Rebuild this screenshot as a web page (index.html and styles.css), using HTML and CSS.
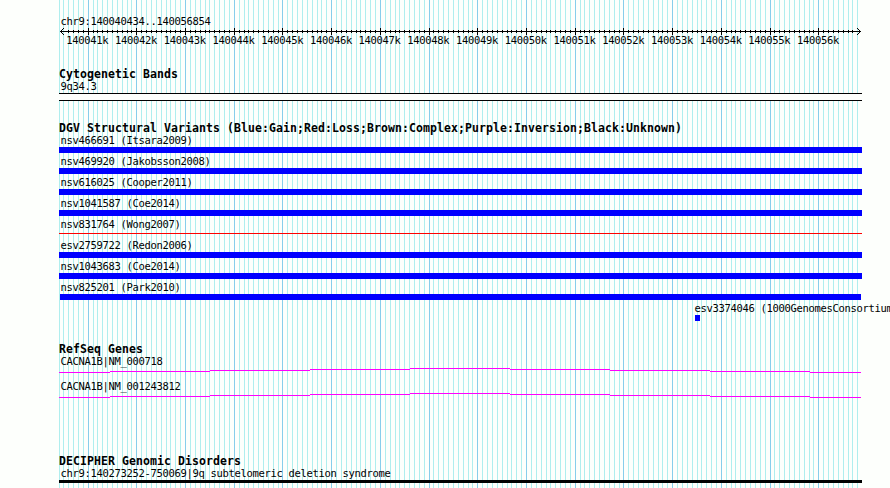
FILE: index.html
```html
<!DOCTYPE html>
<html lang="en">
<head>
    <meta charset="UTF-8">
    <title>chr9:140040434..140056854</title>
    <link rel="stylesheet" href="styles.css">
</head>
<body>
    <div class="browser">
        <svg class="grid" id="grid" width="890" height="488" shape-rendering="crispEdges"></svg>

        <div class="ruler">
            <div class="label">chr9:140040434..140056854</div>
            <svg class="axis" id="axis" width="803" height="7" shape-rendering="crispEdges"></svg>
            <div class="ticks" id="ticks"></div>
        </div>

        <div class="track cyto">
            <h2>Cytogenetic Bands</h2>
            <div class="label">9q34.3</div>
            <div class="band"></div>
        </div>

        <div class="track dgv">
            <h2>DGV Structural Variants (Blue:Gain;Red:Loss;Brown:Complex;Purple:Inversion;Black:Unknown)</h2>
            <div class="variant"><div class="label">nsv466691 (Itsara2009)</div><div class="bar gain"></div></div>
            <div class="variant"><div class="label">nsv469920 (Jakobsson2008)</div><div class="bar gain"></div></div>
            <div class="variant"><div class="label">nsv616025 (Cooper2011)</div><div class="bar gain"></div></div>
            <div class="variant"><div class="label">nsv1041587 (Coe2014)</div><div class="bar gain"></div></div>
            <div class="variant"><div class="label">nsv831764 (Wong2007)</div><div class="bar loss"></div></div>
            <div class="variant"><div class="label">esv2759722 (Redon2006)</div><div class="bar gain"></div></div>
            <div class="variant"><div class="label">nsv1043683 (Coe2014)</div><div class="bar gain"></div></div>
            <div class="variant"><div class="label">nsv825201 (Park2010)</div><div class="bar gain inset"></div></div>
            <div class="variant short"><div class="label">esv3374046 (1000GenomesConsortium</div><div class="bar gain"></div></div>
        </div>

        <div class="track genes">
            <h2>RefSeq Genes</h2>
            <div class="gene">
                <div class="label">CACNA1B|NM_000718</div>
                <svg class="intron" width="803" height="5" shape-rendering="crispEdges"><path d="M0 4.5H51M51 3.5H151M151 2.5H251M251 1.5H351M351 .5H451M451 1.5H551M551 2.5H651M651 3.5H751M751 4.5H802"/></svg>
            </div>
            <div class="gene">
                <div class="label">CACNA1B|NM_001243812</div>
                <svg class="intron" width="803" height="5" shape-rendering="crispEdges"><path d="M0 4.5H51M51 3.5H151M151 2.5H251M251 1.5H351M351 .5H451M451 1.5H551M551 2.5H651M651 3.5H751M751 4.5H802"/></svg>
            </div>
        </div>

        <div class="track decipher">
            <h2>DECIPHER Genomic Disorders</h2>
            <div class="label">chr9:140273252-750069|9q subtelomeric deletion syndrome</div>
            <div class="bar disorder"></div>
        </div>
    </div>

    <script>
        // x position of 140041k and width of 100 bp in pixels
        const origin = 88.14;
        const step = 4.871;
        const left = 59;

        let minor = '';
        let major = '';
        let axis = 'M1 3.5H802M4 0.5H5M3 1.5H4M2 2.5H3M2 4.5H3M3 5.5H4M4 6.5H5'
            + 'M798 0.5H799M799 1.5H800M800 2.5H801M800 4.5H801M799 5.5H800M798 6.5H799';

        for (let i = -6; i <= 158; i++) {
            const x = Math.max(left, Math.floor(origin + i * step));
            const isMajor = i % 10 === 0;
            if (isMajor) {
                major += `M${x + 0.5} 0V488`;
                axis += `M${x - left + 0.5} 0V7`;
            } else {
                minor += `M${x + 0.5} 0V488`;
                if (i > -5 && i < 158) {
                    axis += `M${x - left + 0.5} 2V5`;
                }
            }
        }

        document.getElementById('grid').innerHTML =
            `<path class="minor" d="${minor}"/><path class="major" d="${major}"/>`;
        document.getElementById('axis').innerHTML = `<path d="${axis}"/>`;

        const ticks = document.getElementById('ticks');
        for (let k = 0; k < 16; k++) {
            const span = document.createElement('span');
            span.textContent = (140041 + k) + 'k';
            ticks.appendChild(span);
        }
    </script>
</body>
</html>
```
FILE: styles.css
```css
body {
    margin: 0;
    background-color: #fdfffc;
    color: #000;
    font-family: "DejaVu Sans Mono", monospace;
    overflow: hidden;
}
.browser {
    position: relative;
    width: 890px;
    height: 488px;
    padding-left: 59px;
    box-sizing: border-box;
    overflow: hidden;
}
.grid {
    position: absolute;
    left: 0;
    top: 0;
    z-index: -1;
}
.grid path,
.axis path,
.intron path {
    fill: none;
    stroke-width: 1;
}
.grid .minor {
    stroke: #afeeee;
}
.grid .major {
    stroke: #87ceeb;
}
.axis path {
    stroke: #000;
}
.intron path {
    stroke: #ff00ff;
}
svg {
    display: block;
}
.label,
.ticks {
    font-size: 10.5px;
    letter-spacing: -0.32px;
    line-height: 13px;
    height: 13px;
    white-space: nowrap;
}
.label {
    padding-left: 1.5px;
}
h2 {
    margin: 0;
    font-size: 11.5px;
    letter-spacing: 0.077px;
    line-height: 13px;
    height: 12px;
    font-weight: bold;
    white-space: nowrap;
}
.ruler {
    padding-top: 15px;
    height: 53px;
}
.ticks {
    display: flex;
    margin-top: -1px;
    padding-left: 7.3px;
}
.ticks span {
    flex: 0 0 48.72px;
}
.band {
    width: 803px;
    height: 8px;
    box-sizing: border-box;
    border-top: 1px solid #000;
    border-bottom: 1px solid #000;
    background-color: #fdfffc;
}
.cyto {
    height: 54px;
}
.dgv {
    height: 221px;
}
.variant {
    height: 21px;
}
.bar {
    width: 803px;
    height: 6px;
}
.loss {
    height: 1px;
    margin-top: 2px;
    background-color: #ff0000;
}
.gain {
    background-color: #0000ff;
}
.inset {
    width: 801px;
    margin-left: 1px;
}
.short {
    padding-left: 634px;
}
.short .bar {
    width: 5px;
    margin-left: 2px;
}
.genes {
    height: 112px;
}
.gene {
    height: 25px;
}
.disorder {
    height: 3px;
    background-color: #000;
}
```
